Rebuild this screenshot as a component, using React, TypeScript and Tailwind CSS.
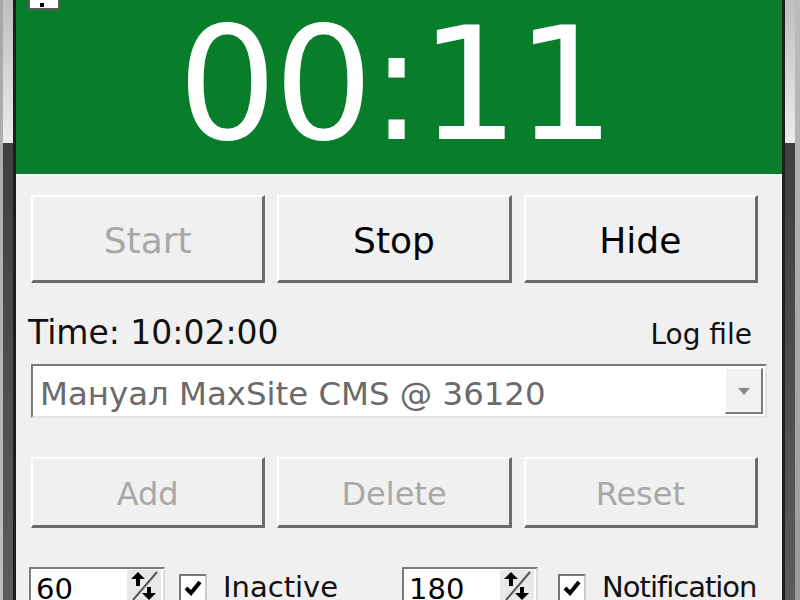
import React from "react";

const font = { fontFamily: '"DejaVu Sans", Verdana, sans-serif' };

function Btn({ label, disabled, h, size }: { label: string; disabled?: boolean; h: string; size: string }) {
  return (
    <div
      className={`flex-1 ${h} flex items-center justify-center pt-[4px] bg-[#f0f0f0] border-t-2 border-l-2 border-t-white border-l-white border-b-[3px] border-r-[3px] border-b-[#6b6b6b] border-r-[#6b6b6b] ${size} ${
        disabled ? "text-[#a8a8a8]" : "text-black"
      }`}
    >
      {label}
    </div>
  );
}

function SpinIcon() {
  return (
    <svg width="34" height="30" viewBox="0 0 34 30" className="shrink-0">
      <rect x="0" y="0" width="34" height="30" fill="#e8e8e8" />
      <line x1="30" y1="2" x2="6" y2="30" stroke="#555" strokeWidth="2" />
      <path d="M11 2 L4 9 H9 V16 H13 V9 H18 Z" fill="#000" />
      <path d="M22 30 L29 23 H24 V17 H20 V23 H15 Z" fill="#000" />
    </svg>
  );
}

function Check() {
  return (
    <div className="w-[28px] h-[28px] shrink-0 bg-white border-2 border-t-[#777] border-l-[#777] border-b-[#ccc] border-r-[#ccc] flex items-center justify-center">
      <svg width="22" height="22" viewBox="0 0 22 22">
        <path d="M4 11 L9 16 L18 5" fill="none" stroke="#000" strokeWidth="4" />
      </svg>
    </div>
  );
}

function Spinner({ value }: { value: string }) {
  return (
    <div className="w-[136px] h-[40px] bg-white border-2 border-t-[#7a7a7a] border-l-[#7a7a7a] border-b-[#dcdcdc] border-r-[#dcdcdc] flex items-start justify-between pl-[5px] pr-[2px] pt-[1px]">
      <span className="text-[29px] leading-[38px] text-black">{value}</span>
      <SpinIcon />
    </div>
  );
}

function SideBorder({ side }: { side: "l" | "r" }) {
  const outer = <div className="w-[3px] h-full bg-gradient-to-b from-[#a8a8a8] to-[#bdbdbd]" />;
  const mid = (
    <div className="w-[10px] h-full flex flex-col">
      <div className="h-[143px] bg-gradient-to-b from-[#bfbfbf] to-[#ececec]" />
      <div className="flex-1 bg-gradient-to-b from-[#3f3f3f] to-[#5c5c5c]" />
    </div>
  );
  const inner = <div className="w-[3px] h-full bg-[#1e1e1e]" />;
  return (
    <div className="h-full flex shrink-0">
      {side === "l" ? (
        <>
          {outer}
          {mid}
          {inner}
        </>
      ) : (
        <>
          {inner}
          {mid}
          <div className="w-[5px] h-full bg-gradient-to-b from-[#bcbcbc] to-[#9a9a9a]" />
        </>
      )}
    </div>
  );
}

export default function App() {
  return (
    <div className="w-[800px] h-[600px] overflow-hidden flex bg-[#f0f0f0]" style={font}>
      <SideBorder side="l" />
      <div className="flex-1 h-full flex flex-col relative">
        <div className="h-[176px] bg-[#087e2b] flex justify-center pt-[7px] shrink-0 border-b-2 border-b-[#f4fbf6]">
          <span className="text-white text-[156px] leading-none pr-[8px] tracking-[-3px]">00:11</span>
        </div>
        <div className="absolute left-[12px] top-[-22px] w-[32px] h-[32px] bg-white border-2 border-[#5a5a5a] flex items-end justify-center">
          <span className="block w-[4px] h-[4px] bg-black mb-[1px] -ml-[4px]" />
        </div>
        <div className="flex-1 flex flex-col px-[15px] pt-[19px]">
          <div className="flex gap-[12px] pr-[9px]">
            <Btn label="Start" disabled h="h-[88px]" size="text-[36px]" />
            <Btn label="Stop" h="h-[88px]" size="text-[36px]" />
            <Btn label="Hide" h="h-[88px]" size="text-[36px]" />
          </div>
          <div className="flex items-end justify-between mt-[38px] pr-[15px] h-[28px]">
            <span className="text-[33px] leading-none -ml-[3px] text-[#111]">Time: 10:02:00</span>
            <span className="text-[28px] leading-none text-[#111]">Log file</span>
          </div>
          <div className="mt-[15px] h-[54px] bg-white border-2 border-t-[#7a7a7a] border-l-[#7a7a7a] border-b-[#e2e2e2] border-r-[#e2e2e2] flex items-center justify-between pl-[7px] pr-[2px]">
            <span className="text-[32.4px] text-[#6a6a6a] leading-none pt-[6px]">Мануал MaxSite CMS @ 36120</span>
            <div className="w-[38px] h-[46px] bg-[#f2f2f2] border-t border-l border-t-white border-l-white border-b-2 border-r-2 border-b-[#7a7a7a] border-r-[#7a7a7a] flex items-center justify-center">
              <svg width="14" height="10" viewBox="0 0 14 10">
                <path d="M1 2 H13 L7 9 Z" fill="#8a8a8a" />
              </svg>
            </div>
          </div>
          <div className="flex gap-[12px] pr-[9px] mt-[39px]">
            <Btn label="Add" disabled h="h-[71px]" size="text-[32px]" />
            <Btn label="Delete" disabled h="h-[71px]" size="text-[32px]" />
            <Btn label="Reset" disabled h="h-[71px]" size="text-[32px]" />
          </div>
          <div className="flex items-start mt-[39px] -ml-[2px]">
            <Spinner value="60" />
            <div className="ml-[14px] mt-[7px]">
              <Check />
            </div>
            <span className="ml-[16px] mt-[6px] text-[29px] leading-none text-[#111]">Inactive</span>
            <div className="ml-[64px]">
              <Spinner value="180" />
            </div>
            <div className="ml-[20px] mt-[7px]">
              <Check />
            </div>
            <span className="ml-[16px] mt-[6px] text-[29px] leading-none text-[#111] tracking-[-1px]">Notification</span>
          </div>
        </div>
      </div>
      <SideBorder side="r" />
    </div>
  );
}
